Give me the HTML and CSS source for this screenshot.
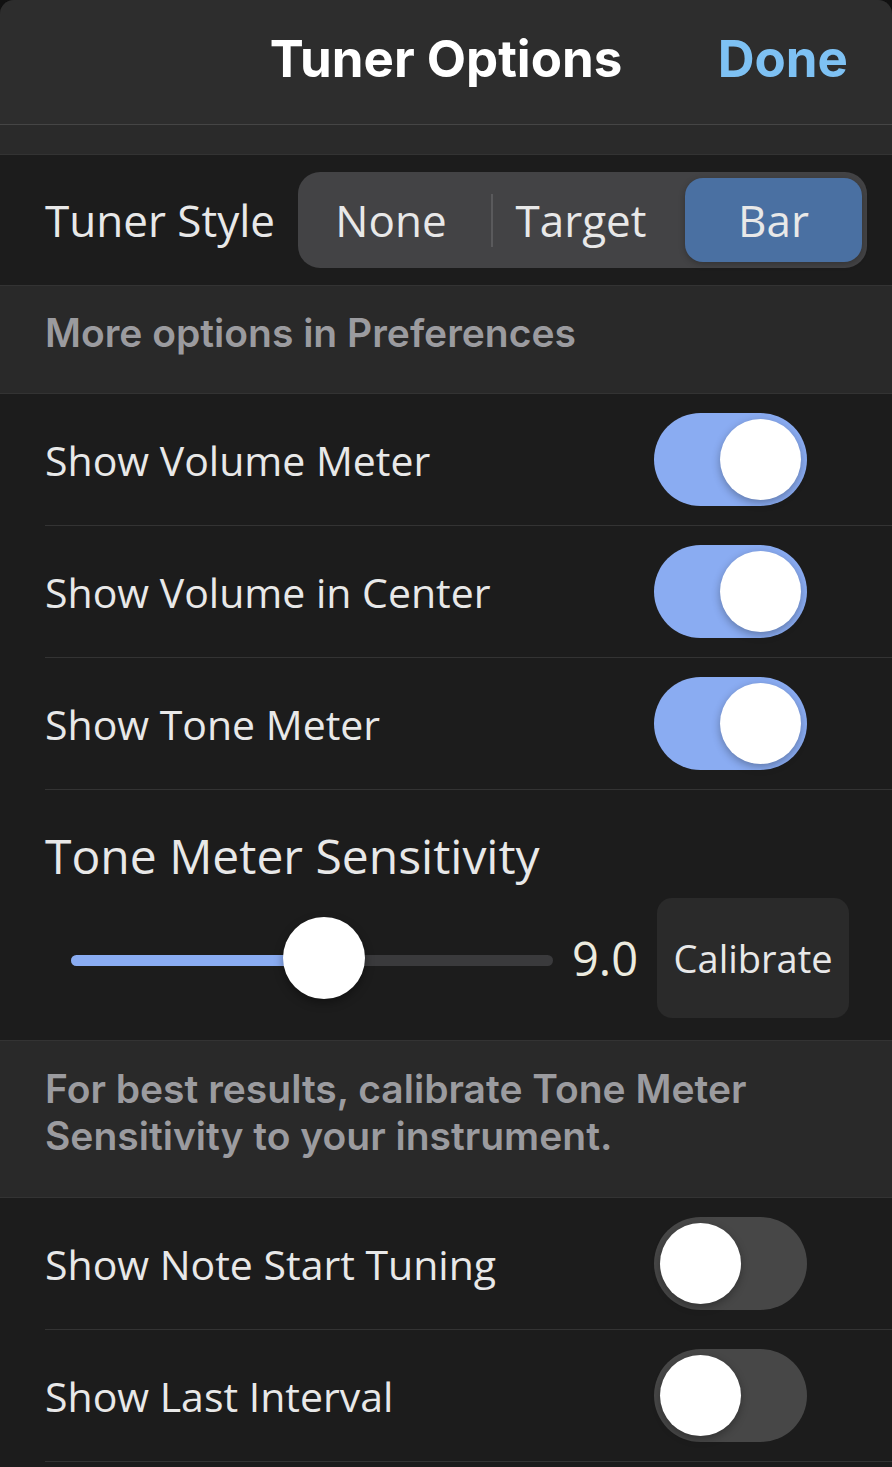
FILE: index.html
```html
<!DOCTYPE html>
<html lang="en">
<head>
    <meta charset="UTF-8">
    <title>Tuner Options</title>
    <link rel="stylesheet" href="styles.css">
</head>
<body>
    <div class="sheet">
        <!-- навигация -->
        <header class="nav">
            <span></span>
            <span class="nav-title">Tuner Options</span>
            <button class="nav-done">Done</button>
        </header>
        <div class="spacer"></div>

        <section class="group">
            <div class="style-row">
                <span class="label label-style">Tuner Style</span>
                <div class="segmented">
                    <button class="segment">None</button>
                    <span class="segment-divider"></span>
                    <button class="segment">Target</button>
                    <button class="segment selected">Bar</button>
                </div>
            </div>
        </section>
        <p class="footnote">More options in Preferences</p>

        <section class="group">
            <div class="row">
                <span class="label">Show Volume Meter</span>
                <span class="toggle on"><span class="knob"></span></span>
            </div>
            <div class="row">
                <span class="label">Show Volume in Center</span>
                <span class="toggle on"><span class="knob"></span></span>
            </div>
            <div class="row">
                <span class="label">Show Tone Meter</span>
                <span class="toggle on"><span class="knob"></span></span>
            </div>
            <div class="sensitivity">
                <div class="sensitivity-title">Tone Meter Sensitivity</div>
                <div class="slider-row">
                    <div class="slider">
                        <div class="track"><div class="track-fill" style="width: 52.5%"></div></div>
                        <span class="thumb" style="left: 52.5%"></span>
                    </div>
                    <span class="value">9.0</span>
                    <button class="calibrate">Calibrate</button>
                </div>
            </div>
        </section>
        <p class="footnote footnote-tall">For best results, calibrate Tone Meter<br>Sensitivity to your instrument.</p>

        <section class="group">
            <div class="row">
                <span class="label">Show Note Start Tuning</span>
                <span class="toggle"><span class="knob"></span></span>
            </div>
            <div class="row">
                <span class="label">Show Last Interval</span>
                <span class="toggle"><span class="knob"></span></span>
            </div>
        </section>
    </div>
</body>
</html>
```

FILE: styles.css
```css
:root {
    --sheet-bg: #1c1c1c;
    --nav-bg: #2d2d2d;
    --band-bg: #292929;
    --line: #333333;
    --text: #e8e8e8;
    --muted: #9b9b9f;
    --accent: #8aacf2;
    --done: #7ec1f3;
}

* {
    box-sizing: border-box;
}

body {
    margin: 0;
    background: #111111;
    font-family: "Open Sans", "Noto Sans", sans-serif;
    color: var(--text);
}

button {
    font: inherit;
    color: inherit;
    border: none;
    background: none;
    padding: 0;
}

.sheet {
    background: var(--sheet-bg);
    min-height: 1467px;
    border-radius: 14px 14px 0 0;
    overflow: hidden;
}

.nav {
    height: 125px;
    display: grid;
    grid-template-columns: 1fr auto 1fr;
    align-items: center;
    padding: 0 44px 8px;
    background: var(--nav-bg);
    border-bottom: 1px solid #454545;
    font-family: Inter, "Liberation Sans", sans-serif;
    font-weight: 700;
    font-size: 51px;
}

.nav-title {
    color: #ffffff;
}

.nav-done {
    justify-self: end;
    font-weight: 700;
    color: var(--done);
}

.spacer {
    height: 30px;
    background: #2a2a2a;
    border-bottom: 1px solid var(--line);
}

.label {
    font-size: 41px;
}

.label-style {
    font-size: 44px;
}

.style-row {
    height: 130px;
    display: flex;
    align-items: center;
    justify-content: space-between;
    padding: 0 25px 0 45px;
}

.segmented {
    width: 569px;
    height: 96px;
    display: flex;
    align-items: center;
    padding: 6px 5px;
    background: #434345;
    border-radius: 22px;
}

.segment {
    flex: 1;
    height: 100%;
    font-size: 44px;
    color: var(--text);
    border-radius: 18px;
}

.segment:first-child {
    padding-right: 12px;
}

.segment:nth-child(3) {
    padding-right: 10px;
}

.segment.selected {
    flex: 0 0 177px;
    margin-left: 6px;
    padding-right: 0;
    background: #4a70a2;
    box-shadow: 0 2px 6px rgba(0, 0, 0, 0.25);
}

.segment-divider {
    width: 2px;
    height: 53px;
    background: #5a5a5c;
}

.footnote {
    margin: 0;
    height: 109px;
    display: flex;
    align-items: center;
    padding: 0 45px 14px;
    background: var(--band-bg);
    border-top: 1px solid var(--line);
    border-bottom: 1px solid var(--line);
    font-family: Inter, "Liberation Sans", sans-serif;
    font-weight: 600;
    font-size: 39px;
    line-height: 47px;
    color: var(--muted);
}

.footnote-tall {
    height: 158px;
}

.row {
    height: 132px;
    margin-left: 45px;
    padding-right: 85px;
    display: flex;
    align-items: center;
    justify-content: space-between;
    border-bottom: 1px solid var(--line);
}

.toggle {
    width: 153px;
    height: 93px;
    display: flex;
    align-items: center;
    padding: 0 6px;
    border-radius: 47px;
    background: #474747;
}

.toggle.on {
    justify-content: flex-end;
    background: var(--accent);
}

.knob {
    width: 81px;
    height: 81px;
    border-radius: 50%;
    background: #ffffff;
    box-shadow: 0 3px 8px rgba(0, 0, 0, 0.3);
}

.sensitivity {
    height: 250px;
    padding: 36px 42px 0 45px;
}

.sensitivity-title {
    font-size: 48px;
    line-height: 60px;
}

.slider-row {
    display: flex;
    align-items: center;
    margin-top: 12px;
    padding-left: 26px;
}

.slider {
    position: relative;
    width: 482px;
    height: 82px;
    display: flex;
    align-items: center;
}

.track {
    width: 100%;
    height: 11px;
    margin-top: 4px;
    border-radius: 6px;
    background: #3a3a3c;
    overflow: hidden;
}

.track-fill {
    height: 100%;
    background: var(--accent);
}

.thumb {
    position: absolute;
    top: 0;
    width: 82px;
    height: 82px;
    margin-left: -41px;
    border-radius: 50%;
    background: #ffffff;
    box-shadow: 0 4px 10px rgba(0, 0, 0, 0.35);
}

.value {
    margin: 0 19px;
    font-size: 47px;
    color: #ecebdf;
}

.calibrate {
    width: 192px;
    height: 120px;
    border-radius: 15px;
    background: #2a2a2a;
    font-size: 38px;
    color: var(--text);
}
```
